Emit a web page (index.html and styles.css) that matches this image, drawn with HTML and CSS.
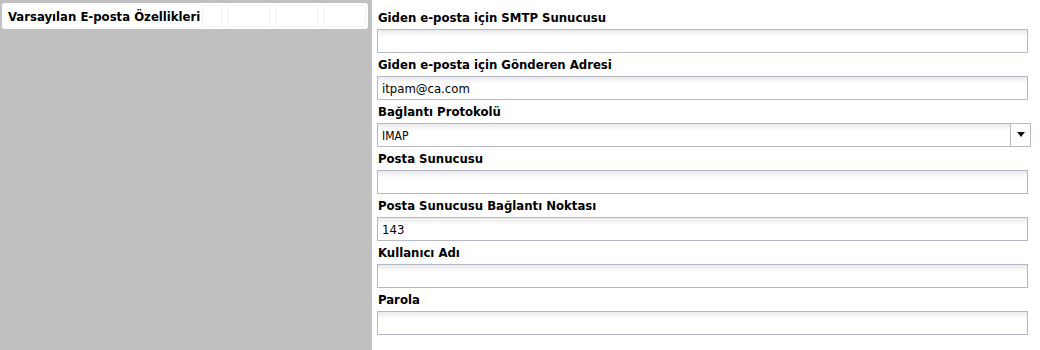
FILE: index.html
```html
<!DOCTYPE html>
<html lang="tr">
<head>
<meta charset="utf-8">
<title>Varsayılan E-posta Özellikleri</title>
<link rel="stylesheet" href="styles.css">
</head>
<body>
<div class="page">
  <aside class="side">
    <div class="tabstrip">
      <span class="tab-title">Varsayılan E-posta Özellikleri</span>
      <span class="ghosts">
        <span class="ghost g1"></span>
        <span class="ghost"></span>
        <span class="ghost"></span>
        <span class="ghost"></span>
      </span>
    </div>
  </aside>
  <main class="form">
    <div class="field">
      <label class="lbl">Giden e-posta için SMTP Sunucusu</label>
      <div class="input"></div>
    </div>
    <div class="field">
      <label class="lbl">Giden e-posta için Gönderen Adresi</label>
      <div class="input">itpam@ca.com</div>
    </div>
    <div class="field">
      <label class="lbl">Bağlantı Protokolü</label>
      <div class="select">
        <span class="select-val">IMAP</span>
        <span class="trigger"><svg width="8" height="5" viewBox="0 0 8 5"><path d="M0 0H8L4 5Z" fill="#111"/></svg></span>
      </div>
    </div>
    <div class="field">
      <label class="lbl">Posta Sunucusu</label>
      <div class="input"></div>
    </div>
    <div class="field">
      <label class="lbl">Posta Sunucusu Bağlantı Noktası</label>
      <div class="input">143</div>
    </div>
    <div class="field">
      <label class="lbl">Kullanıcı Adı</label>
      <div class="input"></div>
    </div>
    <div class="field">
      <label class="lbl">Parola</label>
      <div class="input"></div>
    </div>
  </main>
</div>
</body>
</html>
```
FILE: styles.css
```css
html, body {
  margin: 0;
  padding: 0;
  background: #fff;
}
body {
  font-family: "DejaVu Sans Condensed", "DejaVu Sans", sans-serif;
  font-stretch: condensed;
  font-size: 13px;
  color: #000;
}
.page {
  display: flex;
  height: 350px;
}
.side {
  width: 372px;
  flex: none;
  background: #c0c0c0;
  padding: 3px 4px 0 2px;
  box-sizing: border-box;
}
.tabstrip {
  height: 26px;
  background: #fff;
  border-radius: 3px;
  display: flex;
  align-items: center;
  padding-left: 6px;
}
.tab-title {
  font-weight: bold;
  white-space: nowrap;
  flex: none;
}
.ghosts {
  margin-left: auto;
  margin-right: 2px;
  display: flex;
  gap: 5px;
}
.ghost {
  width: 41px;
  height: 20px;
  border: 1px solid #f2f2f2;
  border-radius: 2px;
}
.ghost.g1 {
  width: 18px;
}
.form {
  flex: 1;
  padding: 6px 0 0 5px;
}
.field {
  display: flex;
  flex-direction: column;
}
.lbl {
  font-weight: bold;
  line-height: 18px;
  padding: 3px 0 0 1px;
  margin-bottom: 2px;
  white-space: nowrap;
}
.input, .select {
  height: 24px;
  box-sizing: border-box;
  border: 1px solid #b5b8c8;
  background: linear-gradient(#eaeaea, #fff 7px);
  padding: 1px 4px 0;
  line-height: 22px;
  width: 651px;
}
.select {
  width: 654px;
  display: flex;
  padding: 0 0 0 4px;
}
.select-val {
  flex: 1;
  font-size: 12px;
  padding-top: 1px;
}
.trigger {
  width: 19px;
  border-left: 1px solid #b5b8c8;
  display: flex;
  align-items: center;
  justify-content: center;
  background: #fff;
}
.trigger svg {
  display: block;
  margin-top: -1px;
}
```
